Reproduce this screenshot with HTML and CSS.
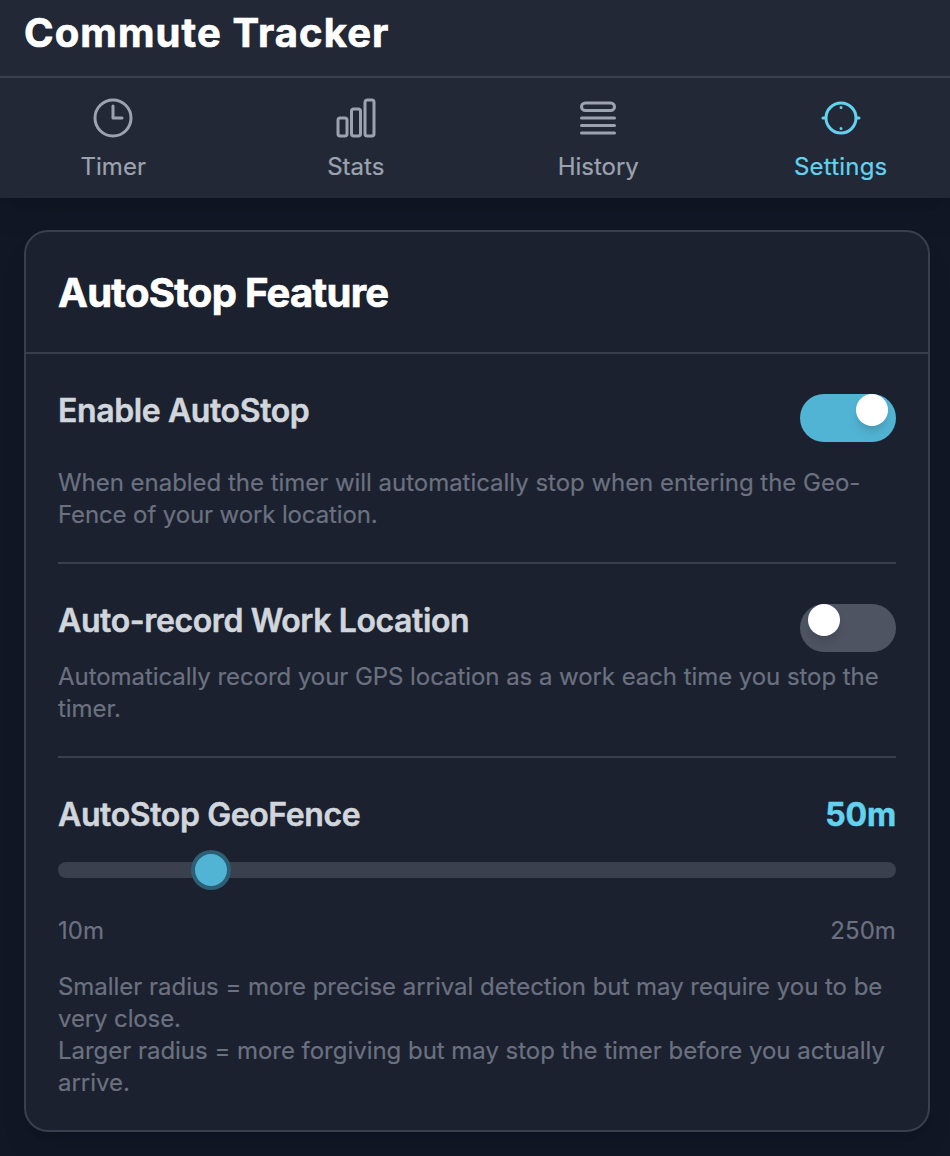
FILE: index.html
```html
<!DOCTYPE html>
<html lang="en">
<head>
<meta charset="utf-8">
<title>Commute Tracker</title>
<link rel="stylesheet" href="styles.css">
</head>
<body>
<div class="app">
  <header class="topbar">
    <h1 class="brand">Commute Tracker</h1>
    <nav class="tabs">
      <a class="tab">
        <svg class="tab-icon" viewBox="0 0 24 24"><path d="M12 6v6h4.5m4.5 0a9 9 0 1 1-18 0 9 9 0 0 1 18 0Z"/></svg>
        <span class="tab-label">Timer</span>
      </a>
      <a class="tab">
        <svg class="tab-icon" viewBox="0 0 24 24"><path d="M3 13.125C3 12.504 3.504 12 4.125 12h2.25c.621 0 1.125.504 1.125 1.125v6.75C7.5 20.496 6.996 21 6.375 21h-2.25A1.125 1.125 0 0 1 3 19.875v-6.75ZM9.75 8.625c0-.621.504-1.125 1.125-1.125h2.25c.621 0 1.125.504 1.125 1.125v11.25c0 .621-.504 1.125-1.125 1.125h-2.25a1.125 1.125 0 0 1-1.125-1.125V8.625ZM16.5 4.125c0-.621.504-1.125 1.125-1.125h2.25C20.496 3 21 3.504 21 4.125v15.75c0 .621-.504 1.125-1.125 1.125h-2.25a1.125 1.125 0 0 1-1.125-1.125V4.125Z"/></svg>
        <span class="tab-label">Stats</span>
      </a>
      <a class="tab">
        <svg class="tab-icon" viewBox="0 0 24 24"><path d="M3.75 12h16.5m-16.5 3.75h16.5M3.75 19.5h16.5M5.625 4.5h12.75a1.875 1.875 0 0 1 0 3.75H5.625a1.875 1.875 0 0 1 0-3.75Z"/></svg>
        <span class="tab-label">History</span>
      </a>
      <a class="tab active">
        <svg class="tab-icon" viewBox="0 0 24 24"><path d="M4.5 12a7.5 7.5 0 0 0 15 0m-15 0a7.5 7.5 0 1 1 15 0m-15 0H3m16.5 0H21M12 6.75h.008M12 17.25h.008"/></svg>
        <span class="tab-label wide">Settings</span>
      </a>
    </nav>
  </header>
  <main class="content">
    <section class="card">
      <h2 class="card-title">AutoStop Feature</h2>
      <div class="card-body">
        <div class="setting">
          <div class="setting-head roomy">
            <h3 class="setting-name">Enable AutoStop</h3>
            <span class="switch on"><span class="knob"></span></span>
          </div>
          <p class="note">When enabled the timer will automatically stop when entering the Geo-<br><span class="snug">Fence of your work location.</span></p>
        </div>
        <div class="setting">
          <div class="setting-head">
            <h3 class="setting-name">Auto-record Work Location</h3>
            <span class="switch"><span class="knob"></span></span>
          </div>
          <p class="note tight">Automatically record your GPS location as a work each time you stop the<br>timer.</p>
        </div>
        <div class="setting">
          <div class="setting-head slider-head">
            <h3 class="setting-name">AutoStop GeoFence</h3>
            <span class="value">50m</span>
          </div>
          <div class="slider"><span class="thumb"></span></div>
          <div class="range"><span>10m</span><span>250m</span></div>
          <p class="note">Smaller radius = more precise arrival detection but may require you to be<br><span class="snug">very close.</span><br>Larger radius = more forgiving but may stop the timer before you actually<br>arrive.</p>
        </div>
      </div>
    </section>
  </main>
</div>
</body>
</html>
```

FILE: styles.css
```css
* { box-sizing: border-box; margin: 0; padding: 0; }
body {
  height: 1156px;
  overflow: hidden;
  background: #111725;
  font-family: Inter, "Liberation Sans", sans-serif;
  -webkit-font-smoothing: antialiased;
}
.app { width: 954px; height: 1156px; }
.topbar {
  background: #222835;
  box-shadow: 0 20px 30px -6px rgba(0, 0, 0, .1), 0 8px 12px -8px rgba(0, 0, 0, .1);
}
.brand {
  height: 78px;
  padding-left: 24px;
  border-bottom: 2px solid #3a404d;
  color: #fff;
  font-size: 40px;
  font-weight: 700;
  line-height: 65px;
  letter-spacing: 1.1px;
  -webkit-text-stroke: .7px #fff;
}
.tabs { display: grid; grid-template-columns: repeat(4, 1fr); gap: 16px; height: 120px; padding: 16px 0; }
.tab { display: flex; flex-direction: column; align-items: center; gap: 8px; color: #9ca3b0; }
.tab.active { color: #63d2ee; }
.tab-icon { width: 48px; height: 48px; fill: none; stroke: currentColor; stroke-width: 1.5; stroke-linecap: round; stroke-linejoin: round; }
.tab-label { font-size: 24px; line-height: 34px; letter-spacing: 0; -webkit-text-stroke: .2px currentColor; }
.tab-label.wide { letter-spacing: .2px; }
.content { padding: 32px 24px 24px; }
.card {
  border: 2px solid #393f4c;
  border-radius: 24px;
  background: #1b212e;
  box-shadow: 0 20px 30px -6px rgba(0, 0, 0, .1), 0 8px 12px -8px rgba(0, 0, 0, .1);
}
.card-title {
  height: 122px;
  padding-left: 32px;
  border-bottom: 2px solid #393f4c;
  color: #fff;
  font-size: 40px;
  font-weight: 700;
  line-height: 121px;
  letter-spacing: -.7px;
  -webkit-text-stroke: .7px #fff;
}
.card-body { padding: 0 32px; }
.setting { padding: 32px 0; }
.setting + .setting { border-top: 2px solid #393f4c; }
.setting-head { display: flex; justify-content: space-between; height: 48px; margin-bottom: 16px; }
.setting-head.roomy { margin-bottom: 32px; }
.setting-name { color: #d1d5dc; font-size: 32px; font-weight: 600; line-height: 50px; letter-spacing: -.39px; -webkit-text-stroke: .5px currentColor; }
.switch { width: 96px; height: 48px; margin-top: 8px; padding: 0 8px; display: flex; border-radius: 24px; background: #4e5462; }
.switch.on { justify-content: flex-end; background: #52b4d4; }
.knob { width: 32px; height: 32px; border-radius: 50%; background: #fff; box-shadow: 0 8px 12px -2px rgba(0, 0, 0, .12), 0 4px 8px -4px rgba(0, 0, 0, .1); }
.note { padding-top: 1px; margin-bottom: -1px; color: #6b7180; font-size: 24px; line-height: 32px; letter-spacing: -.03px; white-space: nowrap; -webkit-text-stroke: .2px currentColor; }
.note.tight { letter-spacing: -.06px; }
.snug { letter-spacing: -.12px; }
.value { color: #63d2ee; font-size: 32px; font-weight: 700; line-height: 50px; letter-spacing: -.2px; -webkit-text-stroke: .5px currentColor; }
.slider-head { margin-bottom: 24px; }
.slider { display: flex; align-items: center; height: 16px; padding-left: 137px; border-radius: 8px; background: #3a404e; }
.thumb { width: 32px; height: 32px; flex: none; border-radius: 50%; background: #52b4d4; box-shadow: 0 0 0 4px #2d5f75; }
.range { display: flex; justify-content: space-between; margin: 37px 0 23px; color: #6b7180; font-size: 24px; line-height: 32px; letter-spacing: .1px; -webkit-text-stroke: .2px currentColor; }
```
